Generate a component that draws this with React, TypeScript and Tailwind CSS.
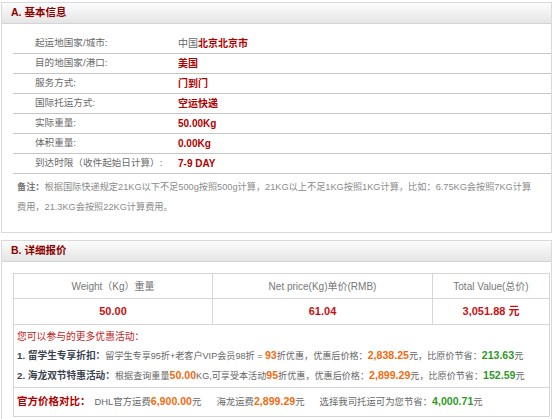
import React from "react";

const font = { fontFamily: '"Liberation Sans", "Noto Sans CJK SC", sans-serif' };

const rowsA: { label: string; value: React.ReactNode }[] = [
  {
    label: "起运地国家/城市:",
    value: (
      <>
        <span className="font-normal text-[#666]">中国</span>北京北京市
      </>
    ),
  },
  { label: "目的地国家/港口:", value: "美国" },
  { label: "服务方式:", value: "门到门" },
  { label: "国际托运方式:", value: "空运快递" },
  { label: "实际重量:", value: "50.00Kg" },
  { label: "体积重量:", value: "0.00Kg" },
  { label: "到达时限（收件起始日计算）:", value: "7-9 DAY" },
];

function Header({ title }: { title: string }) {
  return (
    <div className="h-[21px] border-b border-[#d4d4d4] bg-linear-to-b from-[#fcfcfc] to-[#e5e5e5] pl-[9px] flex items-center">
      <span className="text-[10.5px] font-bold text-[#8e0000]">{title}</span>
    </div>
  );
}

const O = ({ children }: { children: React.ReactNode }) => (
  <span className="font-bold text-[#f26b0f] text-[10.6px]">{children}</span>
);
const G = ({ children }: { children: React.ReactNode }) => (
  <span className="font-bold text-[10.6px] text-[#2f9a1f]">{children}</span>
);

export default function App() {
  return (
    <div style={font} className="w-[553px] h-[419px] overflow-hidden bg-white pt-[2px] pl-[1px] text-[9.6px] text-[#666]">
      {/* Panel A */}
      <div className="w-[551px] h-[231px] border border-[#dadada]">
        <Header title="A. 基本信息" />
        <div className="pt-[10px] pl-[11px]">
          {rowsA.map((r, i) => (
            <div key={i} className="h-[20px] border-b border-[#c6c6c6] grid grid-cols-[165px_1fr] items-center">
              <span className="pl-[22px] text-[#6a6a6a]">{r.label}</span>
              <span className="font-bold text-[10px] text-[#b00000]">{r.value}</span>
            </div>
          ))}
          <div className="pt-[4px] pl-[4px] pr-[6px] leading-[19.5px] text-[#8a8a8a] text-[9.2px] whitespace-nowrap">
            <span className="font-bold text-[#777]">备注：</span>根据国际快递规定21KG以下不足500g按照500g计算，21KG以上不足1KG按照1KG计算，比如：6.75KG会按照7KG计算
            <br />
            费用，21.3KG会按照22KG计算费用。
          </div>
        </div>
      </div>

      {/* Panel B */}
      <div className="w-[551px] mt-[7px] h-[200px] border border-[#dadada]">
        <Header title="B. 详细报价" />
        <div className="pt-[11px] pl-[11px] pr-[1px]">
          <div className="border border-[#d6d6d6]">
            <div className="grid grid-cols-[199px_220px_1fr] text-center">
              <div className="h-[25px] border-r border-b border-[#d6d6d6] flex items-center justify-center text-[#777] text-[10px]">Weight（Kg）重量</div>
              <div className="h-[25px] border-r border-b border-[#d6d6d6] flex items-center justify-center text-[#777] text-[10px]">Net price(Kg)单价(RMB)</div>
              <div className="h-[25px] border-b border-[#d6d6d6] flex items-center justify-center text-[#777] text-[10px]">Total Value(总价)</div>
              <div className="h-[26px] border-r border-b border-[#d6d6d6] flex items-center justify-center font-bold text-[11px] text-[#c81010]">50.00</div>
              <div className="h-[26px] border-r border-b border-[#d6d6d6] flex items-center justify-center font-bold text-[11px] text-[#c81010]">61.04</div>
              <div className="h-[26px] border-b border-[#d6d6d6] flex items-center justify-center font-bold text-[11px] text-[#c81010]">3,051.88 元</div>
            </div>
            <div className="pt-[2px] pb-[1px] pl-[3px] leading-[19px] whitespace-nowrap text-[9.1px]">
              <div className="text-[#c41a1a] text-[9.8px]">您可以参与的更多优惠活动：</div>
              <div>
                <span className="font-bold text-[#3a4250] text-[9.7px]">1. 留学生专享折扣：</span>留学生专享95折+老客户VIP会员98折 = <O>93</O>折优惠，优惠后价格：<O>2,838.25</O>元，比原价节省：<G>213.63</G>元
              </div>
              <div>
                <span className="font-bold text-[#3a4250] text-[9.7px]">2. 海龙双节特惠活动：</span>根据查询重量<O>50.00</O>KG,可享受本活动<O>95</O>折优惠，优惠后价格：<O>2,899.29</O>元，比原价节省：<G>152.59</G>元
              </div>
            </div>
            <div className="h-[29px] border-t border-[#d6d6d6] pl-[3px] flex items-center whitespace-nowrap text-[9.4px]">
              <span className="font-bold text-[10.5px] text-[#b00000]">官方价格对比：</span>
              <span className="ml-[4px]">DHL官方运费<O>6,900.00</O>元</span>
              <span className="ml-[15px]">海龙运费<O>2,899.29</O>元</span>
              <span className="ml-[15px]">选择我司托运可为您节省：<G>4,000.71</G>元</span>
            </div>
          </div>
        </div>
      </div>
    </div>
  );
}
